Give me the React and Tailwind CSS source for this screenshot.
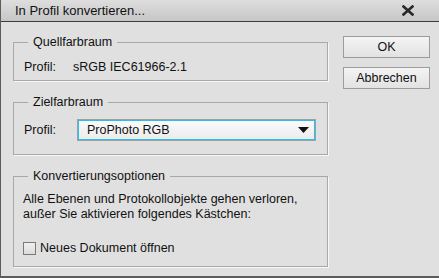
const FONT = { fontFamily: '"Liberation Sans", Arial, sans-serif' }

function Group({ title, className, children }) {
  return (
    <div className={`relative border border-[#a8a8a8] shadow-[1px_1px_0_#f8f8f8] ${className}`}>
      <span className="absolute -top-[9px] left-[14px] bg-[#e0e0e0] px-[5px] leading-[16px] text-[12.5px] text-[#111]">
        {title}
      </span>
      {children}
    </div>
  )
}

function Button({ children }) {
  return (
    <button
      type="button"
      className="w-[87px] h-[22px] border border-[#9c9c9c] bg-gradient-to-b from-[#f4f4f4] to-[#e2e2e2] text-[12.5px] text-[#111] leading-none"
    >
      {children}
    </button>
  )
}

export default function App() {
  return (
    <div
      className="w-[439px] h-[278px] flex flex-col bg-[#e0e0e0] border-l border-b-2 border-[#5c5c5c] overflow-hidden"
      style={FONT}
    >
      <div className="h-[22px] shrink-0 flex items-center justify-between pl-[14px] pr-[25px] bg-gradient-to-b from-[#dedede] to-[#c6c6c6] border-b border-[#3c3c3c]">
        <span className="text-[13px] text-[#111] leading-none">In Profil konvertieren...</span>
        <svg width="12" height="11" viewBox="0 0 12 11" className="text-[#2a2a2a]">
          <path d="M1.5 1.5 L10.5 9.5 M10.5 1.5 L1.5 9.5" stroke="currentColor" strokeWidth="2.6" strokeLinecap="square" />
        </svg>
      </div>

      <div className="flex flex-1">
        <div className="w-[327px] pl-[12px] flex flex-col">
          <Group title="Quellfarbraum" className="mt-[20px] h-[39px]">
            <div className="flex pl-[10px] pt-[17px] text-[12.5px] leading-[15px] text-[#111]">
              <span className="w-[49px]">Profil:</span>
              <span>sRGB IEC61966-2.1</span>
            </div>
          </Group>

          <Group title="Zielfarbraum" className="mt-[21px] h-[53px]">
            <div className="flex items-center pl-[10px] pt-[16px] text-[12.5px] text-[#111]">
              <span className="w-[53px]">Profil:</span>
              <div className="w-[239px] h-[22px] border border-[#a0a0a0]">
                <div className="h-full flex items-center justify-between border border-[#27c0ee] bg-gradient-to-b from-[#fafafa] to-[#ececec] pl-[8px] pr-[5px]">
                  <span className="leading-none">ProPhoto RGB</span>
                  <svg width="11" height="7" viewBox="0 0 11 7">
                    <path d="M0 0 H11 L5.5 6 Z" fill="#111" />
                  </svg>
                </div>
              </div>
            </div>
          </Group>

          <Group title="Konvertierungsoptionen" className="mt-[21px] h-[91px]">
            <div className="pl-[9px] pt-[15px] text-[12.5px] leading-[15px] text-[#111]">
              <p>Alle Ebenen und Protokollobjekte gehen verloren,</p>
              <p>außer Sie aktivieren folgendes Kästchen:</p>
              <label className="mt-[19px] flex items-center gap-[4px]">
                <span className="w-[13px] h-[13px] border border-[#7a7a7a] bg-gradient-to-b from-[#f0f0f0] to-[#dcdcdc]" />
                <span>Neues Dokument öffnen</span>
              </label>
            </div>
          </Group>
        </div>

        <div className="flex flex-col gap-[9px] pl-[15px] pt-[14px]">
          <Button>OK</Button>
          <Button>Abbrechen</Button>
        </div>
      </div>
    </div>
  )
}
